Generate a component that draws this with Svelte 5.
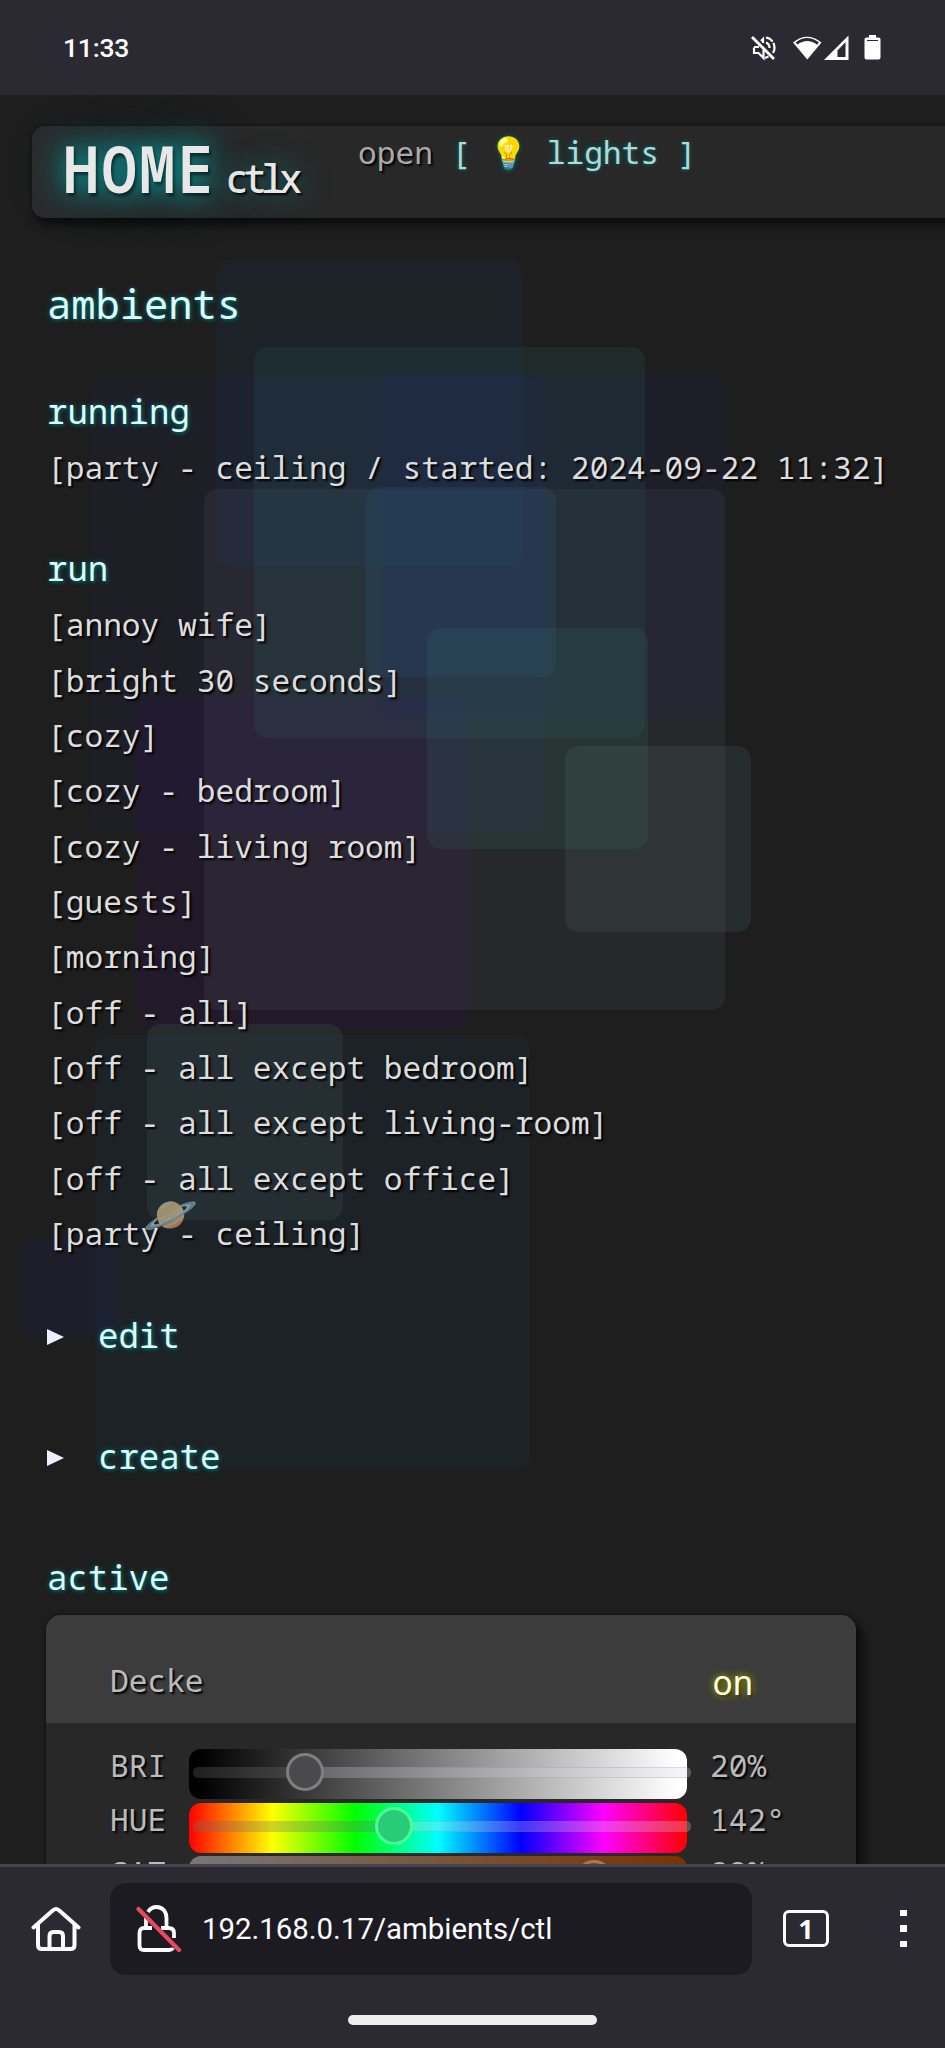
<script>
  const scenes = [
    'annoy wife',
    'bright 30 seconds',
    'cozy',
    'cozy - bedroom',
    'cozy - living room',
    'guests',
    'morning',
    'off - all',
    'off - all except bedroom',
    'off - all except living-room',
    'off - all except office',
    'party - ceiling'
  ];

  // floating background tiles: left, top, size, colour
  const tiles = [
    [137, 603, 331, 'rgba(70, 10, 115, 0.14)'],
    [90, 282, 455, 'rgba(30, 30, 110, 0.12)'],
    [204, 394, 521, 'rgba(130, 135, 145, 0.1)'],
    [216, 165, 307, 'rgba(30, 60, 110, 0.15)'],
    [254, 252, 391, 'rgba(40, 115, 110, 0.15)'],
    [381, 277, 346, 'rgba(33, 33, 115, 0.14)'],
    [366, 392, 190, 'rgba(45, 110, 155, 0.15)'],
    [427, 533, 221, 'rgba(50, 130, 120, 0.15)'],
    [565, 651, 186, 'rgba(110, 145, 150, 0.12)'],
    [95, 940, 435, 'rgba(30, 60, 95, 0.15)'],
    [147, 929, 196, 'rgba(100, 150, 140, 0.12)'],
    [19, 1145, 97, 'rgba(24, 35, 120, 0.12)']
  ];

  const sliders = [
    { name: 'BRI', value: '20%', pos: 115.5, bg: 'linear-gradient(90deg, #000 2%, #fff 98%)' },
    { name: 'HUE', value: '142°', pos: 204.5, bg: 'linear-gradient(90deg, #f00, #ff0, #0f0, #0ff, #00f, #f0f, #f00)' },
    { name: 'SAT', value: '82%', pos: 405, bg: 'linear-gradient(90deg, #777, #7a3300)' }
  ];
</script>

<div class="phone">
  <header class="status">
    <span class="clock">11:33</span>
    <svg class="status-icons" width="130" height="28" viewBox="0 0 130 28">
      <g fill="none" stroke="#fff" stroke-width="2.2">
        <path d="M2 3 24 25" stroke-width="2.8" />
        <path d="M4 13.500v5.500h4.500l5 5v-8M4 13h5M13 9v-4l-2 2" />
        <path d="M16 3.500c5.500 1 8.500 5 8.500 10.500 0 2-.5 3.500-1.500 5" stroke-dasharray="8 1.500 20" />
        <path d="M16 8.500c2.500 1 3.500 3 3.500 5.500M15 24l3.500-1.500" />
      </g>
      <path d="M43 8.500Q57 -3 71.500 8.500L57.300 25.500Z" fill="#fff" />
      <path d="M46.500 9.500Q57 1.500 68 9.500" fill="none" stroke="#2b2a33" stroke-width="2.800" />
      <path d="M74 26 98.500 1.500V26Z" fill="#fff" />
      <path d="M87.500 16.500 95.500 8V23H87.500Z" fill="#2b2a33" />
      <path d="M119 1h7v2.500h2.500q2 0 2 2V23.500q0 2-2 2H116.500q-2 0-2-2V5.500q0-2 2-2H119Z" fill="#fff" />
      <path d="M117 6.500h11" stroke="#2b2a33" stroke-width="1" />
    </svg>
  </header>

  <div class="page">
    <div class="sky">
      {#each tiles as [x, y, s, c]}
        <i style="left:{x}px;top:{y}px;width:{s}px;height:{s}px;background:{c}"></i>
      {/each}
      <span class="planet">🪐</span>
    </div>

    <div class="topbar">
      <div class="brand"><b>HOME</b><span>ctlx</span></div>
      <div class="open">open <span class="link">[ 💡 lights ]</span></div>
    </div>

    <main>
      <h1>ambients</h1>
      <h2>running</h2>
      <div class="row">[party - ceiling / started: 2024-09-22 11:32]</div>
      <h2 class="run">run</h2>
      {#each scenes as s}
        <div class="row">[{s}]</div>
      {/each}
      {#each ['edit', 'create'] as name}
        <h2 class="fold"><svg width="18" height="20" viewBox="0 0 18 20"><path d="M0 2 17 10 0 18Z" fill="#eef" /></svg>{name}</h2>
      {/each}
      <h2 class="active">active</h2>
      <section class="card">
        <div class="head"><span>Decke</span><span class="on">on</span></div>
        <div class="sliders">
          {#each sliders as s}
            <div class="line">
              <span class="label">{s.name}</span>
              <div class="bar" style="background:{s.bg}">
                <div class="before" style="width:{s.pos - 5}px"></div>
                <div class="after"></div>
                <div class="thumb" style="left:{s.pos - 19}px"></div>
              </div>
              <span class="val">{s.value}</span>
            </div>
          {/each}
        </div>
      </section>
    </main>
  </div>

  <footer>
    <div class="tools">
      <svg class="home" width="50" height="46" viewBox="0 0 50 46" fill="none" stroke="#fbfbfe" stroke-width="4" stroke-linecap="round" stroke-linejoin="round">
        <path d="M2.500 21.500 22 4.200Q25 1.800 28 4.200L47.500 21.500" />
        <path d="M7 19V39q0 4 4 4H39.500q4 0 4-4V19" />
        <path d="M18.500 42V30q0-4 4-4H28q4 0 4 4V42" />
      </svg>
      <div class="url">
        <svg width="46" height="50" viewBox="0 0 46 50" fill="none" stroke="#fbfbfe" stroke-width="3.800" stroke-linecap="butt">
          <path d="M12 8Q15 3 20.500 3C27 3 30.500 8 30.500 14V24" />
          <path d="M10 14V24M16 24H8Q3.500 24 3.500 29V41.500Q3.500 46 8 46H33q3 0 4-2M25 24H32.500Q38 24 38 29V34" />
          <path d="M2.500 5 43 46" stroke="#e8485f" stroke-width="4.200" stroke-linecap="round" />
        </svg>
        <span>192.168.0.17/ambients/ctl</span>
      </div>
      <div class="tabs">1</div>
      <div class="dots"><i></i><i></i><i></i></div>
    </div>
    <div class="gesture"></div>
  </footer>
</div>

<style>
  :global(body) { margin: 0; background: #1e1e1e; }
  .phone {
    width: 945px; height: 2048px; display: flex; flex-direction: column; overflow: hidden;
    background: #1e1e1e; font-family: "Noto Sans Mono", "Droid Sans Mono", "DejaVu Sans Mono", monospace;
  }
  .status {
    box-sizing: border-box; height: 95px; flex: none; background: #2b2a33;
    display: flex; justify-content: space-between; align-items: center; padding: 0 65px 0 63px;
  }
  .clock { font: 500 26.500px Roboto, sans-serif; color: #fff; letter-spacing: -.2px; }
  .status-icons { margin-top: 1px; overflow: visible; }

  .page { flex: 1; min-height: 0; overflow: hidden; position: relative; }
  .sky { position: absolute; inset: 0; }
  .sky i { position: absolute; border-radius: 14px; }
  .planet { position: absolute; left: 143px; top: 1095px; font-size: 44px; line-height: 46px; opacity: .6; }

  .topbar {
    position: relative; margin: 31px -40px 0 32px; height: 92px; border-radius: 13px; display: flex;
    background: linear-gradient(90deg, #2b2b2d, #282828 30%); box-shadow: 4px 8px 9px rgba(0, 0, 0, .5), 0 0 4px rgba(0, 0, 0, .4);
  }
  .brand {
    width: 326px; padding-left: 31px; box-sizing: border-box; color: #e8e8e8; line-height: 84px; white-space: nowrap; display: flex; align-items: baseline;
    text-shadow: 2px 3px 3px rgba(0, 0, 0, .5), 0 0 26px rgba(10, 150, 150, .9), 0 0 34px rgba(0, 150, 150, .8), 0 0 60px rgba(0, 140, 140, .35);
  }
  .brand b { width: 154px; font-size: 64.500px; font-weight: 600; letter-spacing: 2.300px; transform: scaleX(.93); transform-origin: left; flex: none; }
  .brand span { font-size: 39px; letter-spacing: -5.600px; margin-left: 8.500px; font-weight: 500; text-shadow: 2px 2px 2px rgba(0, 0, 0, .8), 0 0 30px rgba(0, 150, 150, .8); }
  .open { font-size: 31.200px; line-height: 52px; color: #aaa; text-shadow: 2px 2px 2px #000; white-space: pre; }
  .link { color: #b9d5d5; text-shadow: 0 0 5px #006060, 0 0 3px #006060; }

  main { position: relative; padding: 59px 0 0 47px; color: #ddd; }
  h1, h2 { margin: 0; font-weight: 400; line-height: 54px; color: #dff8f8; text-shadow: 0 0 5px #077, 2px 2px 3px #044; }
  h1 { font-size: 40.400px; margin-bottom: 53px; }
  h2 { font-size: 34px; }
  .row { font-size: 31.200px; line-height: 55.350px; white-space: pre; text-shadow: 2px 2px 2px #000; position: relative; top: 2px; }
  .run { margin-top: 48px; }
  .fold { display: flex; align-items: center; gap: 33px; margin: 49px 0 67px; }
  .fold svg { margin-top: 4px; }
  .fold + .fold { margin-top: 0; }
  .active { margin-bottom: 11px; }

  .card {
    width: 810px; margin-left: -1px; border-radius: 15px; background: #282828; overflow: hidden; height: 420px;
    box-shadow: 8px 8px 9px rgba(0, 0, 0, .5), 0 0 4px rgba(0, 0, 0, .5); color: #bbb; font-size: 31.200px; text-shadow: 2px 2px 2px #000;
  }
  .head {
    height: 108px; box-sizing: border-box; padding: 26px 103px 0 64px; background: #3c3c3c;
    display: flex; justify-content: space-between; line-height: 78px;
  }
  .on { font-size: 33.800px; color: #ffffe8; line-height: 82px; text-shadow: 0 0 6px #880, 0 0 9px #880, 2px 2px 2px rgba(0, 0, 0, .6); }
  .sliders { padding: 26px 0 0 64px; display: grid; gap: 3.500px; }
  .line { height: 50px; display: flex; line-height: 33px; }
  .label { width: 79px; }
  .bar {
    flex: none; width: 498px; height: 50px; border-radius: 12px; position: relative; margin-right: 23px;
    display: flex; align-items: center; box-sizing: border-box; padding-left: 4px;
  }
  .before { height: 11px; border-radius: 6px 0 0 6px; background: rgba(110, 110, 110, .3); flex: none; margin-top: -3px; }
  .after { height: 9px; border-radius: 0 5px 5px 0; background: rgba(215, 215, 225, .27); border: 1px solid rgba(120, 120, 120, .2); margin-top: -3px; flex: 1; margin-right: -4px; }
  .thumb { position: absolute; top: 4px; width: 32px; height: 32px; border: 3px solid rgba(145, 145, 145, .75); border-radius: 50%; background: #4a494e; }
  .line:nth-child(2) .thumb { background: #28cc78; border-color: #4dfa94; }
  .line:nth-child(3) .thumb { background: #7a4a28; border-color: #a87755; }

  footer { height: 184px; box-sizing: border-box; border-top: 3px solid #45444e; background: #2b2a33; flex: none; }
  .tools { display: flex; align-items: center; height: 92px; padding: 15.500px 0 0 31px; }
  .home { flex: none; margin-right: 29px; }
  .url {
    width: 642px; height: 92px; border-radius: 16px; background: #1c1b22; color: #fbfbfe; flex: none;
    display: flex; align-items: center; font: 29.400px Roboto, sans-serif;
  }
  .url svg { margin: 0 20px 0 26px; }
  .url span { margin-top: 1px; }
  .tabs {
    width: 40px; height: 31px; border: 3.500px solid #fbfbfe; border-radius: 6px; margin-left: 31px; flex: none;
    color: #fbfbfe; font: 700 27px/31px "Open Sans", sans-serif; text-align: center;
  }
  .dots { margin-left: 71px; display: grid; gap: 9px; }
  .dots i { width: 6.500px; height: 6.500px; background: #fbfbfe; }
  .gesture { width: 249px; height: 10px; margin: 40px auto 0; border-radius: 5px; background: #ededed; }
</style>
